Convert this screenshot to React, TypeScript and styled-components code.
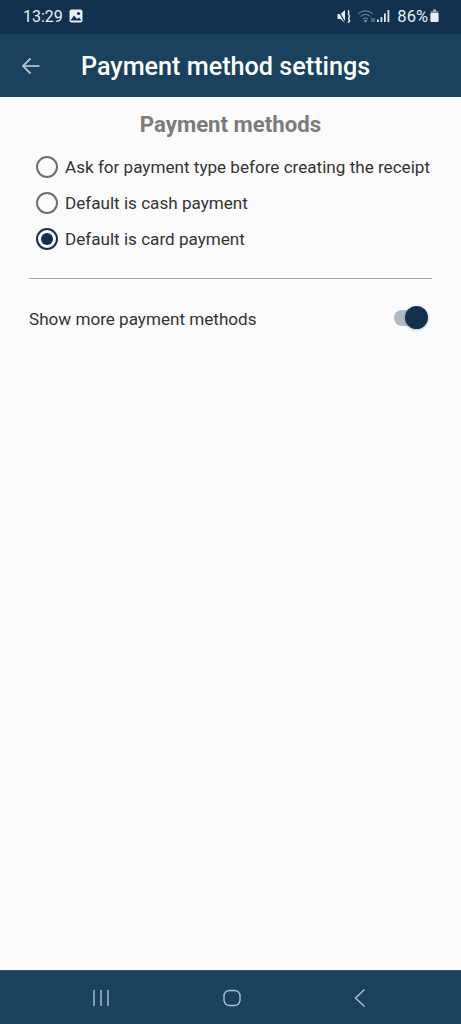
import styled, { createGlobalStyle } from 'styled-components';

const GlobalStyle = createGlobalStyle`
  html, body {
    margin: 0;
    padding: 0;
    background: #fbfbfb;
  }
  * {
    box-sizing: border-box;
  }
`;

const options = [
  { label: 'Ask for payment type before creating the receipt', checked: false },
  { label: 'Default is cash payment', checked: false },
  { label: 'Default is card payment', checked: true },
];

export default function App() {
  return (
    <Screen>
      <GlobalStyle />
      <StatusBar>
        <StatusLeft>
          <span>13:29</span>
          <svg width="14" height="14" viewBox="0 0 14 14">
            <rect x="0.5" y="0.5" width="13" height="13" rx="2" fill="#e8eef3" />
            <circle cx="9.5" cy="4.5" r="1.6" fill="#11314f" />
            <path d="M1.5 11.5 L5 6.5 L8 10 L10 8.5 L12.5 11.5 Z" fill="#11314f" />
          </svg>
        </StatusLeft>
        <StatusRight>
          <svg width="15" height="15" viewBox="0 0 15 15" fill="none">
            <path d="M0.5 5 H3.5 L8 1 V14 L3.5 10 H0.5 Z" fill="#e8eef3" />
            <path d="M1 1 L8.5 14" stroke="#11314f" strokeWidth="1.2" />
            <path d="M11 1.5 C13.5 3 10 4.5 12 6 C14 7.5 10.5 9 12 10.5 C13.5 12 11.5 13 11 13.5" stroke="#e8eef3" strokeWidth="1.5" />
          </svg>
          <WifiIcon width="18" height="14" viewBox="0 0 18 14" fill="none" stroke="#8599aa" strokeWidth="1">
            <path d="M1 5 C5 1 12 1 16 5" />
            <path d="M3.5 7.5 C6.5 4.8 10.5 4.8 13.5 7.5" />
            <path d="M6 10 C7.5 8.6 9.5 8.6 11 10" />
            <circle cx="8.5" cy="12" r="0.9" fill="#8599aa" />
            <path d="M15 9 V13 M17 9 V13" />
          </WifiIcon>
          <svg width="13" height="14" viewBox="0 0 13 14" fill="#dfe6ec">
            <rect x="0" y="10.5" width="1.8" height="2.5" />
            <rect x="3.5" y="8" width="1.8" height="5" />
            <rect x="7" y="4.5" width="1.8" height="8.5" />
            <rect x="10.5" y="1" width="1.8" height="12" />
          </svg>
          <Battery>86%</Battery>
          <svg width="9" height="14" viewBox="0 0 9 14" fill="#e8eef3">
            <rect x="3" y="0.5" width="3" height="2" opacity="0.7" />
            <rect x="0.5" y="2" width="8" height="11" rx="1.2" opacity="0.45" />
            <rect x="0.5" y="4" width="8" height="9" rx="1.2" />
          </svg>
        </StatusRight>
      </StatusBar>
      <AppBar>
        <BackButton>
          <svg width="20" height="20" viewBox="0 0 20 20" fill="none" stroke="#b4c3d0" strokeWidth="1.8">
            <path d="M18.5 10 H2" />
            <path d="M9.5 2.5 L2 10 L9.5 17.5" />
          </svg>
        </BackButton>
        <Title>Payment method settings</Title>
      </AppBar>
      <Content>
        <SectionTitle>Payment methods</SectionTitle>
        <RadioList>
          {options.map((option) => (
            <RadioRow key={option.label}>
              <RadioCircle $checked={option.checked} />
              <RadioLabel>{option.label}</RadioLabel>
            </RadioRow>
          ))}
        </RadioList>
        <Divider />
        <SwitchRow>
          <SwitchLabel>Show more payment methods</SwitchLabel>
          <SwitchTrack>
            <SwitchThumb />
          </SwitchTrack>
        </SwitchRow>
      </Content>
      <NavBar>
        <svg width="18" height="18" viewBox="0 0 18 18" stroke="#a9c3d4" strokeWidth="1.4">
          <path d="M2 1 V17 M9 1 V17 M16 1 V17" />
        </svg>
        <svg width="18" height="18" viewBox="0 0 18 18" fill="none" stroke="#a9c3d4" strokeWidth="1.4">
          <rect x="1" y="1.5" width="16" height="15" rx="5.5" />
        </svg>
        <svg width="14" height="20" viewBox="0 0 14 20" fill="none" stroke="#a9c3d4" strokeWidth="1.4">
          <path d="M11.5 1.5 L2.5 10 L11.5 18.5" />
        </svg>
      </NavBar>
    </Screen>
  );
}

const Screen = styled.div`
  display: flex;
  flex-direction: column;
  width: 461px;
  height: 1024px;
  overflow: hidden;
  font-family: Roboto, 'Liberation Sans', sans-serif;
  background-color: #fbfbfb;
`;

const StatusBar = styled.div`
  display: flex;
  justify-content: space-between;
  align-items: center;
  height: 34px;
  padding: 0 22px 2px 23px;
  color: #e8eef3;
  background-color: #11314f;
`;

const StatusLeft = styled.div`
  display: flex;
  align-items: center;
  gap: 6px;
  font-size: 16px;
`;

const StatusRight = styled.div`
  display: flex;
  align-items: center;
  gap: 2px;
`;

const WifiIcon = styled.svg`
  margin-left: 3px;
`;

const Battery = styled.span`
  margin-left: 5px;
  font-size: 16.5px;
`;

const AppBar = styled.div`
  display: flex;
  align-items: center;
  height: 63px;
  padding-left: 21px;
  background-color: #1a425e;
`;

const BackButton = styled.div`
  display: flex;
  width: 60px;
`;

const Title = styled.div`
  padding-top: 2px;
  font-size: 25.2px;
  font-weight: 500;
  color: #ffffff;
`;

const Content = styled.div`
  display: flex;
  flex-direction: column;
  flex: 1;
  padding: 14px 29px 0;
`;

const SectionTitle = styled.div`
  font-size: 22.2px;
  font-weight: 700;
  line-height: 26px;
  text-align: center;
  color: #7b7b7b;
`;

const RadioList = styled.div`
  display: flex;
  flex-direction: column;
  gap: 12px;
  margin-top: 18px;
  padding-left: 7px;
`;

const RadioRow = styled.div`
  display: flex;
  align-items: center;
  gap: 7px;
  height: 24px;
`;

const RadioCircle = styled.div<{ $checked: boolean }>`
  position: relative;
  width: 22px;
  height: 22px;
  border-radius: 50%;
  border: 2px solid ${(p) => (p.$checked ? '#11314f' : '#6f6f6f')};

  &::after {
    content: '';
    display: ${(p) => (p.$checked ? 'block' : 'none')};
    position: absolute;
    top: 3px;
    left: 3px;
    width: 12px;
    height: 12px;
    border-radius: 50%;
    background-color: #11314f;
  }
`;

const RadioLabel = styled.div`
  font-size: 17.1px;
  white-space: nowrap;
  color: #333333;
`;

const Divider = styled.div`
  height: 1px;
  margin-top: 27px;
  background-color: #a8a8a8;
`;

const SwitchRow = styled.div`
  display: flex;
  justify-content: space-between;
  align-items: center;
  margin-top: 26px;
  padding-right: 5px;
  height: 26px;
`;

const SwitchLabel = styled.div`
  padding-top: 1px;
  font-size: 17.1px;
  color: #333333;
`;

const SwitchTrack = styled.div`
  position: relative;
  width: 33px;
  height: 16px;
  border-radius: 8px;
  background-color: #b2bcc6;
`;

const SwitchThumb = styled.div`
  position: absolute;
  top: -4px;
  right: -1px;
  width: 23px;
  height: 23px;
  border-radius: 50%;
  background-color: #11314f;
  box-shadow: 0 1px 3px rgba(0, 0, 0, 0.25);
`;

const NavBar = styled.div`
  display: flex;
  justify-content: space-between;
  align-items: center;
  height: 54px;
  padding: 0 94px 0 92px;
  border-top: 1px solid #3f5565;
  background-color: #1a425e;
`;
